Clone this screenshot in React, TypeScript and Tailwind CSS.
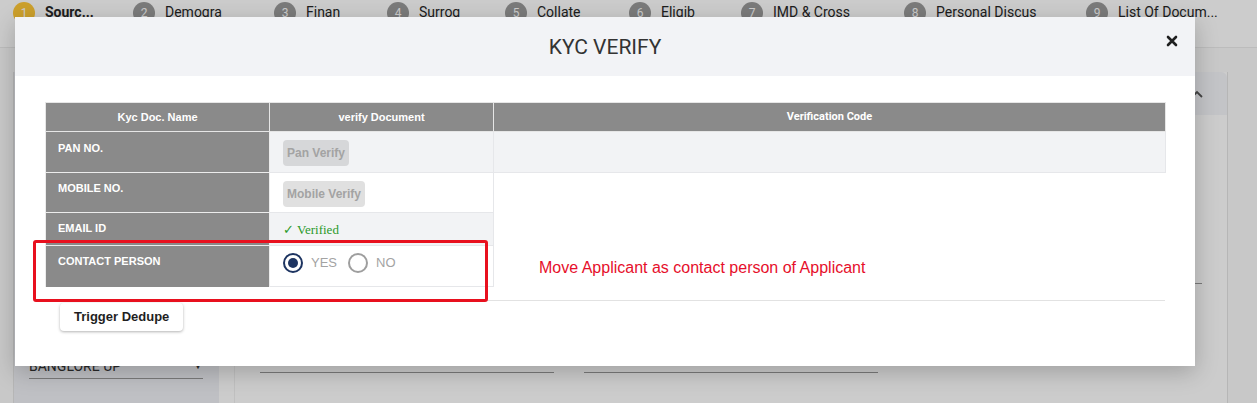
import React from 'react';

const steps = [
  { n: 1, label: 'Sourc...', w: 'w-[120px]', active: true },
  { n: 2, label: 'Demogra', w: 'w-[141px]' },
  { n: 3, label: 'Finan', w: 'w-[113px]' },
  { n: 4, label: 'Surrog', w: 'w-[118px]' },
  { n: 5, label: 'Collate', w: 'w-[124px]' },
  { n: 6, label: 'Eligib', w: 'w-[112px]' },
  { n: 7, label: 'IMD & Cross', w: 'w-[163px]' },
  { n: 8, label: 'Personal Discus', w: 'w-[182px]' },
  { n: 9, label: 'List Of Docum...', w: 'w-[171px]' },
];

const fields = ['Branch', 'Sourcing Channel', 'Scheme', 'Product', 'Sub Product'];

const Stepper = () => (
  <div className="h-[48px] border-b border-[#ececec] bg-white pl-[13px] pt-[2px] flex">
    {steps.map((s) => (
      <div key={s.n} className={`${s.w} flex items-center gap-[10px] h-[22px] shrink-0`}>
        <div
          className={`w-[22px] h-[22px] rounded-full flex items-center justify-center text-[12px] text-white ${
            s.active ? 'bg-[#ffc838]' : 'bg-[#9a9a9a]'
          }`}
        >
          {s.n}
        </div>
        <span className={`text-[14px] leading-[16px] -mt-[2px] text-[#262626] whitespace-nowrap ${s.active ? 'font-bold' : ''}`}>
          {s.label}
        </span>
      </div>
    ))}
  </div>
);

const BackgroundPage = () => (
  <div className="mt-[24px] ml-[13px] w-[1215px] h-[331px] bg-white border-x border-[#e4e4e4] flex">
    <div className="w-[205px] bg-[#eff0f5] px-[15px] pt-[286px] shrink-0">
      <div className="flex items-end justify-between border-b border-[#999] pb-[4px] text-[14px] leading-[16px] text-[#333] w-[174px]">
        <span>BANGLORE UP</span>
        <span className="text-[10px]">▼</span>
      </div>
    </div>
    <div className="ml-[15px] flex-1 border-l border-[#f0f0f0]">
      <div className="h-[43px] bg-[#f4f5f9] rounded-tr-[6px] flex items-center justify-end pr-[24px]">
        <svg width="12" height="8" viewBox="0 0 12 8" fill="none" stroke="#555" strokeWidth="1.8">
          <path d="M1 7l5-5 5 5" />
        </svg>
      </div>
      <div className="px-[25px] pt-[89px] grid grid-cols-3 gap-x-[30px] gap-y-[9px]">
        {fields.map((f) => (
          <div key={f} className="h-[80px] flex flex-col justify-end">
            <span className="text-[12px] text-[#777] mb-[30px]">{f}</span>
            <div className="border-b border-[#999]" />
          </div>
        ))}
      </div>
    </div>
  </div>
);

const KycModal = () => (
  <div className="absolute left-[15px] top-[17px] w-[1180px] h-[349px] bg-white shadow-[0_6px_22px_rgba(0,0,0,0.22)]">
    <div className="h-[59px] bg-[#f2f3f6] flex items-center justify-center">
      <h2 className="text-[21px] text-[#333] font-['Roboto',sans-serif] pt-[2px]">KYC VERIFY</h2>
    </div>
    <button className="absolute right-[17px] top-[18px] w-[12px] h-[12px]">
      <svg width="12" height="12" viewBox="0 0 12 12" stroke="#1f1f1f" strokeWidth="2.6" strokeLinecap="round">
        <path d="M2 2l8 8M10 2l-8 8" />
      </svg>
    </button>

    <div className="pt-[26px] px-[30px] font-['Liberation_Sans',Arial,sans-serif]">
      <table className="w-[1120px] table-fixed border-collapse">
        <colgroup>
          <col className="w-[224px]" />
          <col className="w-[224px]" />
          <col className="w-[672px]" />
        </colgroup>
        <thead>
          <tr className="h-[29px] bg-[#8a8a8a] text-white text-[11px]">
            <th className="font-bold border border-[#e6e6e6]">Kyc Doc. Name</th>
            <th className="font-bold border border-[#e6e6e6]">verify Document</th>
            <th className="font-bold font-['Roboto',sans-serif] border border-[#e6e6e6]">Verification Code</th>
          </tr>
        </thead>
        <tbody className="text-[11px]">
          <tr className="h-[41px]">
            <td className="bg-[#8a8a8a] text-white font-bold align-top pl-[12px] pt-[9px] leading-[14px] border-x border-t border-[#ececec]">
              PAN NO.
            </td>
            <td className="bg-[#f2f3f5] align-top pl-[13px] pt-[8px] border border-[#e6e7ea]">
              <span className="inline-flex items-center h-[26px] px-[4px] rounded-[4px] bg-[#d6d7d9] text-[12px] font-bold text-[#a3a3a3]">
                Pan Verify
              </span>
            </td>
            <td className="bg-[#f2f3f5] border border-[#e6e7ea]" />
          </tr>
          <tr className="h-[40px]">
            <td className="bg-[#8a8a8a] text-white font-bold align-top pl-[12px] pt-[8px] leading-[14px] border-x border-t border-[#ececec]">
              MOBILE NO.
            </td>
            <td className="bg-white align-top pl-[13px] pt-[8px] border border-[#e6e7ea]">
              <span className="inline-flex items-center h-[26px] px-[4px] rounded-[4px] bg-[#e0e0e0] text-[12px] font-bold text-[#a3a3a3]">
                Mobile Verify
              </span>
            </td>
          </tr>
          <tr className="h-[33px]">
            <td className="bg-[#8a8a8a] text-white font-bold align-top pl-[12px] pt-[8px] leading-[14px] border-x border-t border-[#ececec]">
              EMAIL ID
            </td>
            <td className="bg-[#f2f3f5] align-top pl-[13px] pt-[7px] border border-[#e6e7ea]">
              <span className="font-['Liberation_Serif',serif] text-[13px] text-[#2a9a2a]">✓ Verified</span>
            </td>
          </tr>
          <tr className="h-[41px]">
            <td className="bg-[#8a8a8a] text-white font-bold align-top pl-[12px] pt-[8px] leading-[14px] border-x border-t border-[#ececec]">
              CONTACT PERSON
            </td>
            <td className="bg-white align-top pl-[13px] pt-[7px] border border-[#e6e7ea]">
              <div className="flex items-center text-[13px] text-[#a3a3a3]">
                <span className="w-[20px] h-[20px] rounded-full border-2 border-[#1d3461] flex items-center justify-center">
                  <span className="w-[10px] h-[10px] rounded-full bg-[#1d3461]" />
                </span>
                <span className="ml-[8px]">YES</span>
                <span className="ml-[11px] w-[20px] h-[20px] rounded-full border-2 border-[#9e9e9e]" />
                <span className="ml-[8px]">NO</span>
              </div>
            </td>
          </tr>
        </tbody>
      </table>

      <div className="mt-[13px] border-t border-[#e2e2e2]" />
      <button className="mt-[2px] ml-[15px] h-[28px] px-[14px] bg-white rounded-[4px] text-[13px] font-bold text-[#1f1f1f] shadow-[0_1px_3px_rgba(0,0,0,0.3)]">
        Trigger Dedupe
      </button>
    </div>

    {/* annotation */}
    <div className="absolute left-[18px] top-[223px] w-[455px] h-[62px] border-[3px] border-[#e8101e] rounded-[3px]" />
    <p className="absolute left-[524px] top-[242px] text-[16px] leading-[18px] text-[#e60f2b] font-['Liberation_Sans',Arial,sans-serif]">
      Move Applicant as contact person of Applicant
    </p>
  </div>
);

export default function App() {
  return (
    <div className="relative w-[1257px] h-[403px] overflow-hidden bg-[#fafafa] font-['Roboto',sans-serif]">
      <Stepper />
      <BackgroundPage />
      <div className="absolute inset-0 bg-black/20" />
      <KycModal />
    </div>
  );
}
